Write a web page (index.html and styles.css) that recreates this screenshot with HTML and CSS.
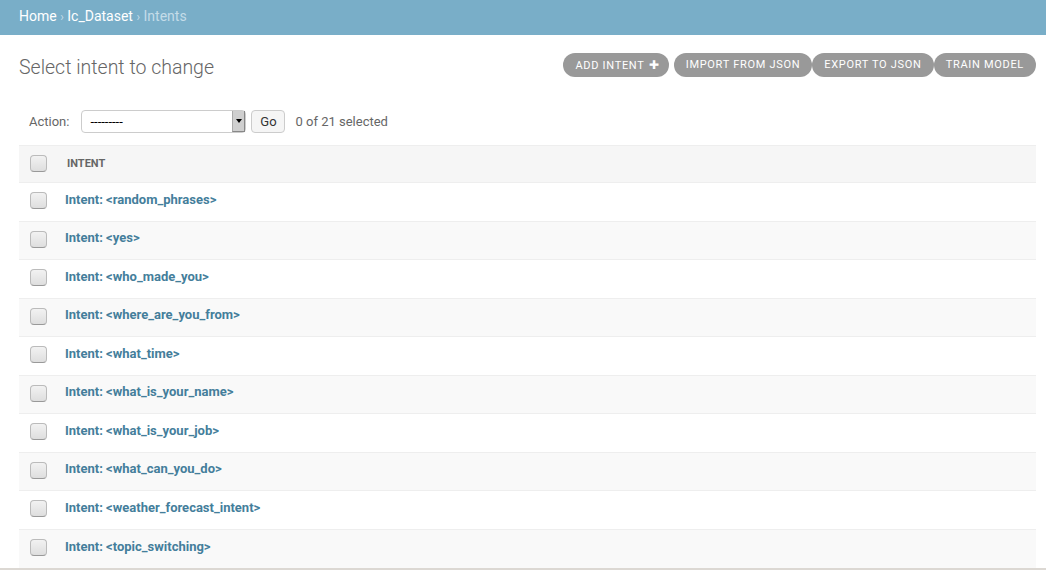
FILE: index.html
```html
<!DOCTYPE html>
<html lang="en">

<head>
    <meta charset="UTF-8">
    <title>Select intent to change</title>
    <link rel="stylesheet" href="styles.css">
</head>

<body>
    <div class="breadcrumbs">
        <a href="#">Home</a> <span class="sep">›</span> <a href="#">Ic_Dataset</a> <span class="sep">›</span> <span class="current">Intents</span>
    </div>

    <div class="content">
        <div class="content-head">
            <h1>Select intent to change</h1>
            <ul class="object-tools">
                <li><a href="#" class="tool first">Add intent <span class="plus">✚</span></a></li>
                <li><a href="#" class="tool">Import from JSON</a></li>
                <li><a href="#" class="tool">Export to JSON</a></li>
                <li><a href="#" class="tool">Train model</a></li>
            </ul>
        </div>

        <div class="actions">
            <label class="action-label">Action:</label>
            <div class="select-wrap">
                <select class="action-select">
                    <option>---------</option>
                </select>
                <span class="select-arrow"></span>
            </div>
            <button class="go-button">Go</button>
            <span class="counter">0 of 21 selected</span>
        </div>

        <table class="result-list">
            <thead>
                <tr>
                    <th class="check-col"><input type="checkbox"></th>
                    <th class="name-col">Intent</th>
                </tr>
            </thead>
            <tbody>
                <tr><td class="check-col"><input type="checkbox"></td><td><a href="#">Intent: &lt;random_phrases&gt;</a></td></tr>
                <tr><td class="check-col"><input type="checkbox"></td><td><a href="#">Intent: &lt;yes&gt;</a></td></tr>
                <tr><td class="check-col"><input type="checkbox"></td><td><a href="#">Intent: &lt;who_made_you&gt;</a></td></tr>
                <tr><td class="check-col"><input type="checkbox"></td><td><a href="#">Intent: &lt;where_are_you_from&gt;</a></td></tr>
                <tr><td class="check-col"><input type="checkbox"></td><td><a href="#">Intent: &lt;what_time&gt;</a></td></tr>
                <tr><td class="check-col"><input type="checkbox"></td><td><a href="#">Intent: &lt;what_is_your_name&gt;</a></td></tr>
                <tr><td class="check-col"><input type="checkbox"></td><td><a href="#">Intent: &lt;what_is_your_job&gt;</a></td></tr>
                <tr><td class="check-col"><input type="checkbox"></td><td><a href="#">Intent: &lt;what_can_you_do&gt;</a></td></tr>
                <tr><td class="check-col"><input type="checkbox"></td><td><a href="#">Intent: &lt;weather_forecast_intent&gt;</a></td></tr>
                <tr><td class="check-col"><input type="checkbox"></td><td><a href="#">Intent: &lt;topic_switching&gt;</a></td></tr>
            </tbody>
        </table>
    </div>

    <div class="bottom-bar"></div>
</body>

</html>
```

FILE: styles.css
```css
body {
    margin: 0;
    font-family: Roboto, "Liberation Sans", Arial, sans-serif;
    font-size: 13px;
    color: #333;
    background: #fff;
    overflow: hidden;
}

a {
    text-decoration: none;
}

.breadcrumbs {
    background: #79aec8;
    height: 35px;
    line-height: 33px;
    padding: 0 19px;
    font-size: 14px;
    color: #c4dce8;
    box-sizing: border-box;
}

.breadcrumbs a {
    color: #fff;
}

.breadcrumbs .sep {
    font-size: 12px;
}

.breadcrumbs .current {
    color: #c4dce8;
}

.content {
    padding: 0 10px 0 19px;
}

.content-head {
    display: flex;
    justify-content: space-between;
    align-items: flex-start;
    padding-top: 18px;
    height: 24px;
}

.content-head h1 {
    margin: 0;
    font-size: 19.5px;
    font-weight: 300;
    color: #666;
    line-height: 30px;
}

.object-tools {
    list-style: none;
    margin: 0;
    padding: 0;
    display: flex;
}

.tool {
    display: block;
    height: 24px;
    line-height: 24px;
    padding: 0 12px;
    border-radius: 12px;
    background: #999;
    color: #fff;
    font-size: 11px;
    letter-spacing: 0.7px;
    text-transform: uppercase;
}

.tool.first {
    margin-right: 5px;
    padding: 0 10px 0 12px;
}

.tool .plus {
    font-size: 12px;
    margin-left: 1px;
    letter-spacing: 0;
}

.actions {
    display: flex;
    align-items: center;
    margin-top: 33px;
    height: 23px;
    padding-left: 10px;
    color: #666;
}

.action-label {
    margin-right: 12px;
}

.select-wrap {
    position: relative;
    width: 165px;
    height: 23px;
}

.action-select {
    appearance: none;
    -webkit-appearance: none;
    width: 100%;
    height: 23px;
    border: 1px solid #ccc;
    border-radius: 4px;
    background: #fff;
    font-family: inherit;
    font-size: 13px;
    color: #000;
    padding: 0 8px;
}

.select-arrow {
    position: absolute;
    right: 1px;
    top: 1px;
    width: 13px;
    height: 21px;
    background: #cfcfcf;
    border-left: 1px solid #aaa;
    border-right: 1px solid #888;
    border-bottom: 1px solid #888;
    box-sizing: border-box;
}

.select-arrow::after {
    content: "";
    position: absolute;
    left: 3px;
    top: 8px;
    border-left: 3px solid transparent;
    border-right: 3px solid transparent;
    border-top: 4px solid #000;
}

.go-button {
    margin-left: 5px;
    width: 34px;
    height: 23px;
    border: 1px solid #ccc;
    border-radius: 4px;
    background: #f5f5f5;
    font-family: inherit;
    font-size: 13px;
    color: #333;
    padding: 0;
}

.counter {
    margin-left: 10px;
}

.result-list {
    width: 100%;
    margin-top: 12px;
    border-collapse: collapse;
}

.result-list th {
    background: #f6f6f6;
    border-top: 1px solid #eee;
    border-bottom: 1px solid #eee;
    height: 37px;
    text-align: left;
    font-size: 11px;
    font-weight: 700;
    color: #666;
    text-transform: uppercase;
    box-sizing: border-box;
    padding: 0 0 2px;
}

.result-list th.name-col {
    padding-left: 2px;
}

.result-list td {
    height: 38.5px;
    border-bottom: 1px solid #eee;
    font-size: 13px;
    font-weight: 700;
    box-sizing: border-box;
    padding: 0 0 5px;
}

.result-list tbody tr:nth-child(even) td {
    background: #f9f9f9;
}

.result-list tbody tr:last-child td {
    border-bottom: none;
}

.result-list td a {
    color: #447e9b;
}

.result-list .check-col {
    width: 46px;
    padding-left: 11px;
}

input[type="checkbox"] {
    appearance: none;
    -webkit-appearance: none;
    display: block;
    margin: 0;
    width: 17px;
    height: 17px;
    border: 1px solid #bbb;
    border-bottom-color: #999;
    border-radius: 4px;
    background: linear-gradient(#f2f2f2, #dedede);
}

.result-list tbody input[type="checkbox"] {
    margin-top: 3px;
}

.bottom-bar {
    height: 4px;
    background: #dcd8d3;
}
```
